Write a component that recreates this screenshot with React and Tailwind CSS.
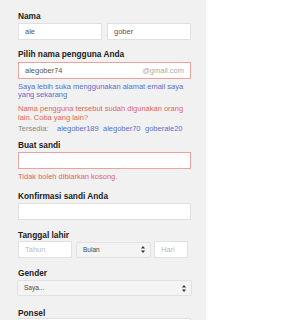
import React from 'react';

function Label({ children, className = '' }) {
  return (
    <div className={`text-[8.3px] leading-[10px] font-bold text-[#222] ${className}`}>{children}</div>
  );
}

function Input({ value, placeholder, error, className = '', children }) {
  return (
    <div
      className={`h-[17px] flex items-center px-[6px] bg-white border text-[7.5px] ${
        error ? 'border-[#eba3a0]' : 'border-[#e0e0e0]'
      } ${className}`}
    >
      {value ? <span className="text-[#555]">{value}</span> : <span className="text-[#bbb]">{placeholder}</span>}
      {children}
    </div>
  );
}

function Arrows() {
  return (
    <svg width="4" height="7" viewBox="0 0 4 7" className="ml-auto">
      <path d="M2 0 L4 2.5 L0 2.5 Z" fill="#333" />
      <path d="M0 4.5 L4 4.5 L2 7 Z" fill="#333" />
    </svg>
  );
}

function Select({ text, className = '' }) {
  return (
    <div
      className={`h-[16px] flex items-center pl-[6px] pr-[5px] bg-[#f4f4f4] border border-[#e2e2e2] rounded-[2px] text-[6.5px] text-[#444] ${className}`}
    >
      <span>{text}</span>
      <Arrows />
    </div>
  );
}

export default function App() {
  return (
    <div className="w-[285px] h-[320px] bg-white overflow-hidden" style={{ fontFamily: '"Liberation Sans", Arial, sans-serif' }}>
      <div className="w-[206px] h-full bg-[#f1f1f1] pl-[18px] pr-[15px] pt-[11px]">
        <Label>Nama</Label>
        <div className="mt-[2px] flex gap-[5px]">
          <Input value="ale" className="w-[84px]" />
          <Input value="gober" className="w-[84px]" />
        </div>

        <Label className="mt-[9px]">Pilih nama pengguna Anda</Label>
        <Input value="alegober74" error className="mt-[3px] w-[173px] h-[16px]">
          <span className="ml-auto text-[#aaa]">@gmail.com</span>
        </Input>
        <div className="mt-[4px] text-[7.5px] leading-[8px] text-[#5a6fd0]">
          Saya lebih suka menggunakan alamat email saya yang sekarang
        </div>
        <div className="mt-[5px] text-[7.5px] leading-[9px] text-[#e0675c]">
          Nama pengguna tersebut sudah digunakan orang lain. Coba yang lain?
        </div>
        <div className="mt-[2px] flex text-[7.5px] leading-[10px]">
          <span className="w-[39px] text-[#888]">Tersedia:</span>
          <span className="w-[46px] text-[#5a6fd0]">alegober189</span>
          <span className="w-[42px] text-[#5a6fd0]">alegober70</span>
          <span className="text-[#5a6fd0]">goberale20</span>
        </div>

        <Label className="mt-[6px]">Buat sandi</Label>
        <Input error className="mt-[2px] w-[173px]" />
        <div className="mt-[3px] text-[7.5px] leading-[9px] text-[#e0675c]">Tidak boleh dibiarkan kosong.</div>

        <Label className="mt-[10px]">Konfirmasi sandi Anda</Label>
        <Input className="mt-[2px] w-[173px]" />

        <Label className="mt-[10px]">Tanggal lahir</Label>
        <div className="mt-[1px] flex items-center">
          <Input placeholder="Tahun" className="w-[54px] h-[16px]" />
          <Select text="Bulan" className="ml-[4px] w-[75px]" />
          <Input placeholder="Hari" className="ml-[3px] w-[34px] h-[16px]" />
        </div>

        <Label className="mt-[10px]">Gender</Label>
        <Select text="Saya..." className="mt-[2px] -ml-[1px] w-[175px]" />

        <Label className="mt-[12px]">Ponsel</Label>
        <Input className="mt-0 w-[173px]" />
      </div>
    </div>
  );
}
